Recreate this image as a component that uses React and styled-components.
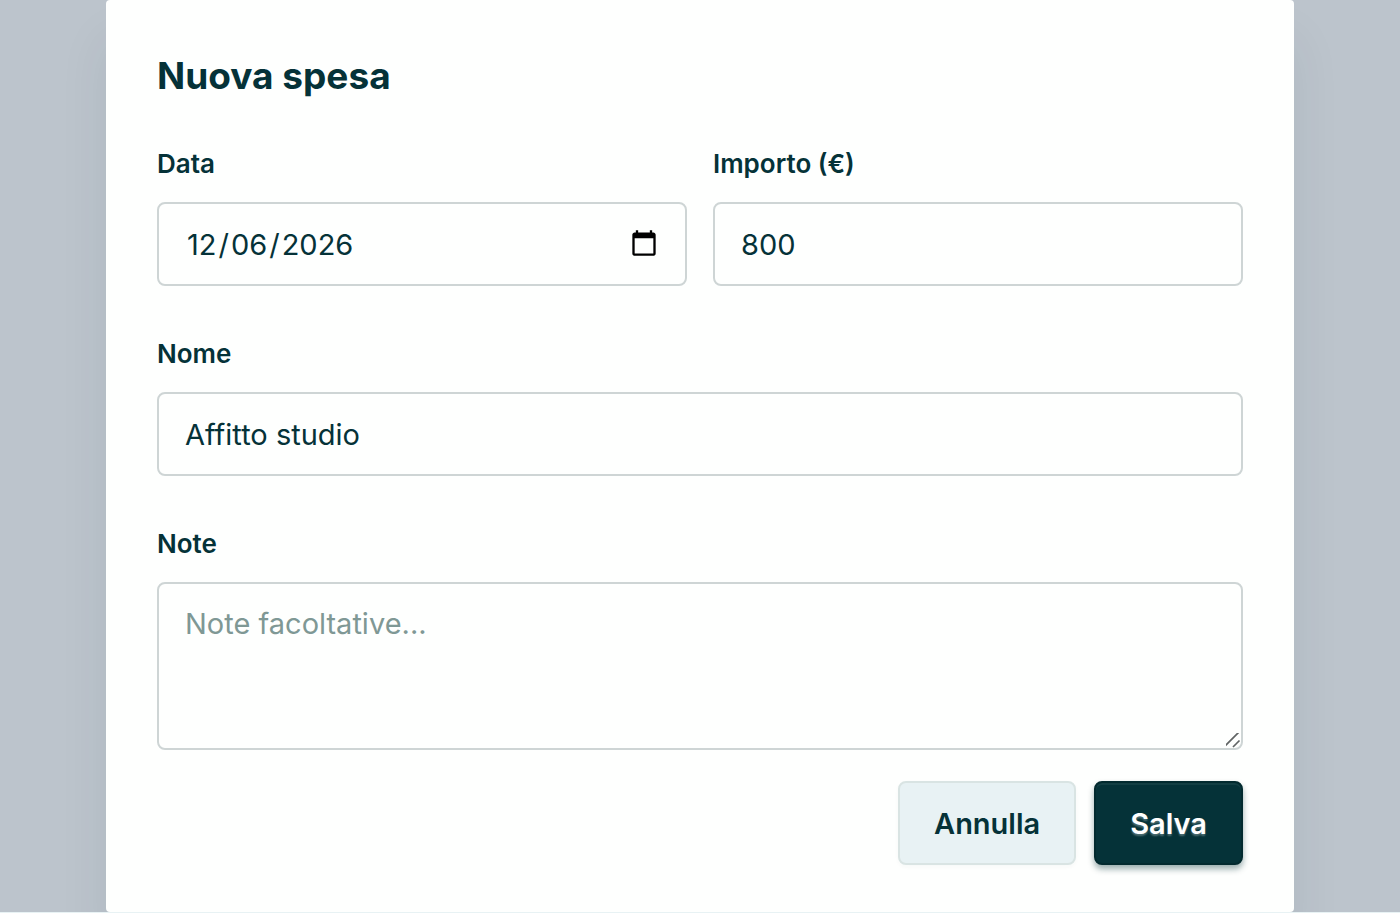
import React from 'react';
import styled, { createGlobalStyle } from 'styled-components';

const GlobalStyle = createGlobalStyle`
	*, *::before, *::after {
		box-sizing: border-box;
	}

	body {
		margin: 0;
		background: #e8f2f4;
		color: #053238;
		font-family: Inter, sans-serif;
		font-optical-sizing: none;
		-webkit-font-smoothing: antialiased;
	}
`;

const Overlay = styled.main`
	min-height: 100vh;
	padding: 0 106px;
	background: #bcc4cc;
	border-bottom: 1px solid #e8f2f4;
	overflow: hidden;
`;

const Card = styled.form`
	padding: 54px 51px 47px;
	background: #fefffe;
	border-radius: 4px;
	box-shadow: 0 40px 50px rgba(20, 45, 65, 0.08);
`;

const Title = styled.h1`
	margin: 0 0 48px;
	font-size: 37px;
	line-height: 44px;
	font-weight: 700;
`;

const Fields = styled.div`
	display: flex;
	flex-direction: column;
	gap: 50px;
`;

const Row = styled.div`
	display: grid;
	grid-template-columns: 1fr 1fr;
	gap: 26px;
`;

const Field = styled.div`
	display: flex;
	flex-direction: column;
	gap: 20px;
	min-width: 0;
`;

const Label = styled.label`
	font-size: 26px;
	line-height: 36px;
	font-weight: 600;
`;

const Input = styled.input`
	width: 100%;
	height: 84px;
	padding: 0 26px;
	border: 2px solid #ced5d5;
	border-radius: 8px;
	outline: none;
	background: #fefffe;
	color: inherit;
	font: inherit;
	font-size: 29px;
`;

const DateInput = styled(Input)`
	padding-right: 24px;

	&::-webkit-datetime-edit-month-field,
	&::-webkit-datetime-edit-day-field,
	&::-webkit-datetime-edit-year-field {
		padding: 0 2px;
	}

	&::-webkit-calendar-picker-indicator {
		width: 30px;
		height: 30px;
	}
`;

const TextArea = styled.textarea`
	display: block;
	width: 100%;
	height: 168px;
	padding: 20px 26px;
	border: 2px solid #ced5d5;
	border-radius: 8px;
	outline: none;
	background: #fefffe;
	color: inherit;
	font: inherit;
	font-size: 29px;
	line-height: 40px;
	resize: vertical;

	&::placeholder {
		color: #7f9895;
	}

	&::-webkit-scrollbar {
		width: 18px;
		height: 18px;
	}

	&::-webkit-resizer {
		background: url("data:image/svg+xml,%3Csvg xmlns='http://www.w3.org/2000/svg' width='18' height='18' fill='none' stroke='%23606464' stroke-width='1.7'%3E%3Cpath d='M1 17 16.5 1.5M10 17l6.5-6.5'/%3E%3C/svg%3E")
			no-repeat right bottom;
	}
`;

const Actions = styled.div`
	display: flex;
	justify-content: flex-end;
	gap: 18px;
	margin-top: 31px;
`;

const Button = styled.button`
	height: 84px;
	padding: 0 34px;
	border: 2px solid ${(props) => (props.$primary ? '#032a2f' : '#d9e4e3')};
	border-radius: 8px;
	background: ${(props) => (props.$primary ? '#053238' : '#e8f2f4')};
	box-shadow: ${(props) =>
		props.$primary
			? 'inset 0 2px 0 rgba(255, 255, 255, 0.06), 0 4px 6px rgba(5, 50, 56, 0.4)'
			: '0 2px 4px rgba(5, 50, 56, 0.03)'};
	color: ${(props) => (props.$primary ? '#fff' : 'inherit')};
	text-shadow: ${(props) => (props.$primary ? '0 2px 2px rgba(255, 255, 255, 0.3)' : 'none')};
	font: inherit;
	font-size: 29px;
	font-weight: 600;
	cursor: pointer;
`;

export default function App() {
	return (
		<>
			<GlobalStyle />
			<Overlay>
				<Card onSubmit={(e) => e.preventDefault()}>
					<Title>Nuova spesa</Title>
					<Fields>
						<Row>
							<Field>
								<Label htmlFor="data">Data</Label>
								<DateInput id="data" type="date" defaultValue="2026-12-06" />
							</Field>
							<Field>
								<Label htmlFor="importo">Importo (€)</Label>
								<Input id="importo" type="text" inputMode="decimal" defaultValue="800" />
							</Field>
						</Row>
						<Field>
							<Label htmlFor="nome">Nome</Label>
							<Input id="nome" type="text" defaultValue="Affitto studio" />
						</Field>
						<Field>
							<Label htmlFor="note">Note</Label>
							<TextArea id="note" placeholder="Note facoltative..." />
						</Field>
					</Fields>
					<Actions>
						<Button type="button">Annulla</Button>
						<Button type="submit" $primary>
							Salva
						</Button>
					</Actions>
				</Card>
			</Overlay>
		</>
	);
}
